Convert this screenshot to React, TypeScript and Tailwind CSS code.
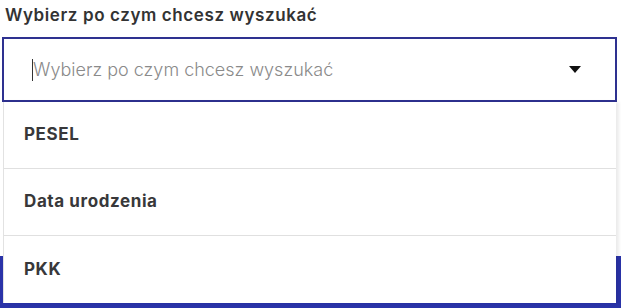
import { useState } from "react";

const options = ["PESEL", "Data urodzenia", "PKK"];

export default function App() {
  const [selected] = useState<string | null>(null);

  return (
    <div
      className="relative h-[308px] w-[621px] overflow-hidden bg-white"
      style={{ fontFamily: "Inter, 'Open Sans', sans-serif" }}
    >
      <div className="flex flex-col">
        <label className="pl-[5px] pt-[3px] h-[37px] text-[17px] font-semibold leading-[24px] tracking-[0.6px] text-[#333333]">
          Wybierz po czym chcesz wyszukać
        </label>

        <div className="ml-[2px] w-[615px] h-[65px] border-2 border-[#2e3190] flex items-center justify-between pl-[28px] pr-[34px]">
          <div className="flex items-center">
            <span className="w-px h-[22px] bg-[#333]" />
            <span className="text-[18px] font-light text-[#8a8a8a]">
              {selected ?? "Wybierz po czym chcesz wyszukać"}
            </span>
          </div>
          <svg width="12" height="7" viewBox="0 0 12 7">
            <path d="M0 0h12L6 7z" fill="#111" />
          </svg>
        </div>

        <div className="mt-[154px] h-[60px] bg-[#2a33a8]" />
      </div>

      {/* open dropdown menu */}
      <ul className="absolute left-[3px] top-[102px] w-[613px] bg-white border-l border-[#e2e2e2] shadow-[3px_0_3px_rgba(0,0,0,0.08)]">
        {options.map((opt, i) => (
          <li
            key={opt}
            className={`h-[67px] flex items-center pl-[20px] text-[17px] font-bold tracking-[0.6px] text-[#38383a] ${
              i < options.length - 1 ? "border-b border-[#e0e0e0]" : ""
            }`}
          >
            {opt}
          </li>
        ))}
      </ul>
    </div>
  );
}
